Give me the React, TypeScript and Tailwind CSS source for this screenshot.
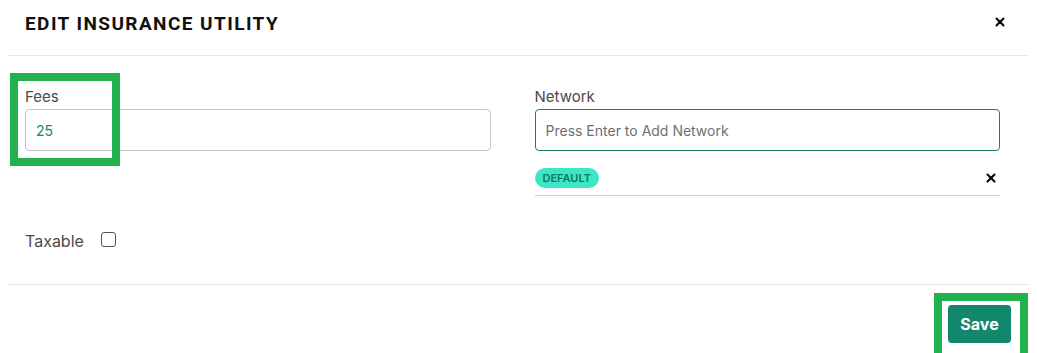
import { X } from 'lucide-react'

export default function App() {
  return (
    <div
      className="relative w-full h-[353px] overflow-hidden bg-white px-2"
      style={{ fontFamily: 'Inter, "Noto Sans", sans-serif' }}
    >
      {/* Header */}
      <div className="flex h-[56px] items-start justify-between border-b border-[#e8e8e8] pl-[17px] pr-[22px] pt-[10px]">
        <h2
          className="text-[19px] font-bold tracking-[0.075em] text-[#111111]"
          style={{ fontFamily: 'Roboto, "Liberation Sans", sans-serif' }}
        >
          EDIT INSURANCE UTILITY
        </h2>
        <button className="mt-[5px] text-black">
          <X size={14} strokeWidth={3.5} />
        </button>
      </div>

      {/* Body */}
      <div className="grid grid-cols-2 gap-[44px] pl-[17px] pr-[29px] pt-[29px]">
        <div className="flex flex-col">
          <label className="text-[15px] leading-[24px] text-[#4a4a4a]">Fees</label>
          <input
            defaultValue="25"
            className="h-[42px] rounded-[4px] border border-[#c6c6c6] px-[10px] text-[14px] text-[#138a6c] outline-none"
          />
        </div>
        <div className="flex flex-col">
          <label className="text-[15px] leading-[24px] text-[#4a4a4a]">Network</label>
          <input
            placeholder="Press Enter to Add Network"
            className="h-[42px] rounded-[4px] border border-[#1b7f66] px-[10px] text-[14px] text-[#333] outline-none placeholder:text-[#6f6f6f]"
          />
          <div className="mt-[17px] flex items-center justify-between border-b border-[#cfcfcf] pb-[7px] pr-[2px]">
            <span className="rounded-full bg-[#3de6c4] px-[8px] py-[3px] text-[11px] font-semibold leading-[14px] text-[#117a60]">
              DEFAULT
            </span>
            <X size={14} strokeWidth={3.5} className="text-black" />
          </div>
        </div>
      </div>

      <div className="flex items-center gap-[17px] pl-[17px] pt-[33px]">
        <span className="text-[16px] text-[#4a4a4a]">Taxable</span>
        <span className="mb-[4px] block h-[15px] w-[15px] rounded-[3px] border border-[#555]" />
      </div>

      {/* Footer */}
      <div className="mt-[31px] flex justify-end border-t border-[#e8e8e8] pr-[18px] pt-[20px]">
        <button className="h-[38px] w-[63px] rounded-[4px] bg-[#12876d] text-[16px] font-bold text-white">
          Save
        </button>
      </div>

      {/* Annotation boxes */}
      <div className="absolute left-[10px] top-[73px] h-[93px] w-[110px] border-[8px] border-[#22b14c]" />
      <div className="absolute left-[934px] top-[293px] h-[68px] w-[94px] border-[8px] border-[#22b14c]" />
    </div>
  )
}
